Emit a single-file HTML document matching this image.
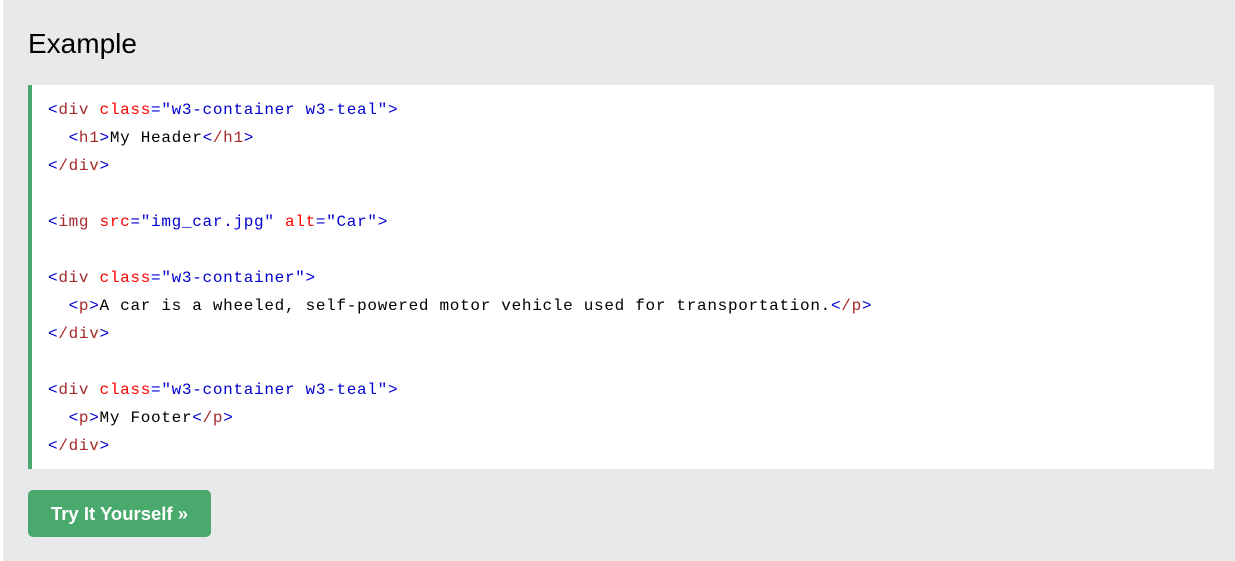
<!DOCTYPE html>
<html><head><style>
body{margin:0;width:1235px;height:561px;background:#fff;overflow:hidden}
.wrap{position:absolute;left:3px;top:0;width:1232px;height:561px;background:#e7e9eb}
h2{position:absolute;left:25px;top:25px;margin:0;font:400 28px/38px "Liberation Sans",sans-serif;color:#000}
.code{position:absolute;left:25px;top:85px;width:1186px;height:384px;background:#fff;border-left:4px solid #4aa96c;box-sizing:border-box;padding:11px 0 0 16px;font:16px/28px "Liberation Mono",monospace;letter-spacing:0.7px;color:#000;white-space:pre}
.b{color:mediumblue}.t{color:brown}.a{color:red}
.btn{position:absolute;left:25px;top:490px;width:183px;height:47px;background:#4aa96c;border-radius:5px;color:#fff;font:bold 18.5px/47px "Liberation Sans",sans-serif;text-align:center}
</style></head><body><div class="wrap">
<h2>Example</h2>
<div class="code"><span class="b">&lt;</span><span class="t">div</span><span class="a"> class</span><span class="b">="w3-container w3-teal"&gt;</span>
  <span class="b">&lt;</span><span class="t">h1</span><span class="b">&gt;</span>My Header<span class="b">&lt;</span><span class="t">/h1</span><span class="b">&gt;</span>
<span class="b">&lt;</span><span class="t">/div</span><span class="b">&gt;</span>

<span class="b">&lt;</span><span class="t">img</span><span class="a"> src</span><span class="b">="img_car.jpg"</span><span class="a"> alt</span><span class="b">="Car"&gt;</span>

<span class="b">&lt;</span><span class="t">div</span><span class="a"> class</span><span class="b">="w3-container"&gt;</span>
  <span class="b">&lt;</span><span class="t">p</span><span class="b">&gt;</span>A car is a wheeled, self-powered motor vehicle used for transportation.<span class="b">&lt;</span><span class="t">/p</span><span class="b">&gt;</span>
<span class="b">&lt;</span><span class="t">/div</span><span class="b">&gt;</span>

<span class="b">&lt;</span><span class="t">div</span><span class="a"> class</span><span class="b">="w3-container w3-teal"&gt;</span>
  <span class="b">&lt;</span><span class="t">p</span><span class="b">&gt;</span>My Footer<span class="b">&lt;</span><span class="t">/p</span><span class="b">&gt;</span>
<span class="b">&lt;</span><span class="t">/div</span><span class="b">&gt;</span></div>
<div class="btn">Try It Yourself »</div>
</div></body></html>
